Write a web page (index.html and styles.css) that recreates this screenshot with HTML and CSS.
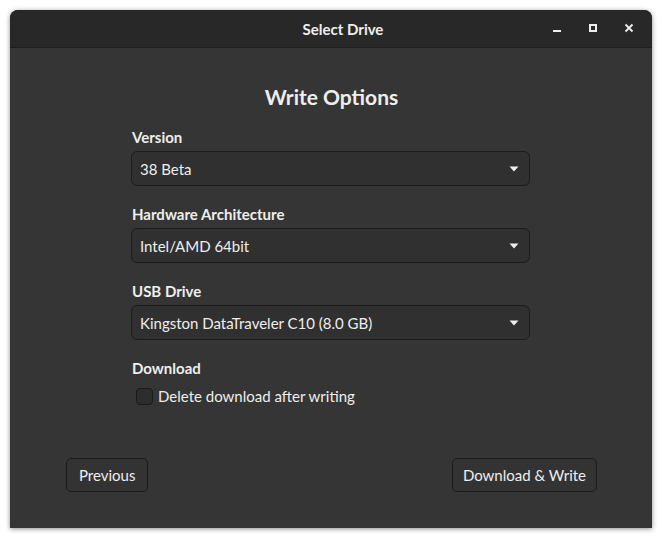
FILE: index.html
```html
<!DOCTYPE html>
<html>
<head>
<meta charset="utf-8">
<link rel="stylesheet" href="styles.css">
</head>
<body>
<div class="window">
  <div class="header">
    <div class="title">Select Drive</div>
    <div class="controls">
      <button class="ctl" aria-label="Minimize"><svg width="16" height="16" viewBox="0 0 16 16"><rect x="4" y="9" width="8" height="2" fill="#eeeeec"/></svg></button>
      <button class="ctl" aria-label="Maximize"><svg width="16" height="16" viewBox="0 0 16 16"><rect x="5" y="4" width="6" height="6" fill="none" stroke="#eeeeec" stroke-width="2"/></svg></button>
      <button class="ctl" aria-label="Close"><svg width="16" height="16" viewBox="0 0 16 16"><path d="M4.5 3.5 L11.5 10.5 M11.5 3.5 L4.5 10.5" stroke="#eeeeec" stroke-width="1.8" fill="none"/></svg></button>
    </div>
  </div>
  <div class="content">
    <h1 class="heading">Write Options</h1>
    <div class="form">
      <div class="group">
        <div class="label">Version</div>
        <button class="combo"><span>38 Beta</span><svg class="arrow" width="10" height="6" viewBox="0 0 10 6"><path d="M0.5 0.5 H9.5 L5 5.5 Z" fill="#eeeeec"/></svg></button>
      </div>
      <div class="group">
        <div class="label">Hardware Architecture</div>
        <button class="combo"><span>Intel/AMD 64bit</span><svg class="arrow" width="10" height="6" viewBox="0 0 10 6"><path d="M0.5 0.5 H9.5 L5 5.5 Z" fill="#eeeeec"/></svg></button>
      </div>
      <div class="group">
        <div class="label">USB Drive</div>
        <button class="combo"><span>Kingston DataTraveler C10 (8.0 GB)</span><svg class="arrow" width="10" height="6" viewBox="0 0 10 6"><path d="M0.5 0.5 H9.5 L5 5.5 Z" fill="#eeeeec"/></svg></button>
      </div>
      <div class="group">
        <div class="label">Download</div>
        <label class="check"><span class="box"></span><span>Delete download after writing</span></label>
      </div>
    </div>
    <div class="actions">
      <button class="btn">Previous</button>
      <button class="btn btn-wide">Download &amp; Write</button>
    </div>
  </div>
</div>
</body>
</html>
```
FILE: styles.css
```css
* { box-sizing: border-box; }
html, body { margin: 0; padding: 0; }
body {
  background: #ffffff;
  width: 662px;
  height: 539px;
  overflow: hidden;
  font-family: "Lato", "Noto Sans", sans-serif;
  color: #eeeeec;
}
.window {
  margin: 10px 0 0 10px;
  width: 642px;
  height: 518px;
  border-radius: 8px 8px 0 0;
  overflow: hidden;
  background: #353535;
  box-shadow: 0 1px 5px rgba(0,0,0,0.45);
  display: flex;
  flex-direction: column;
}
.header {
  height: 38px;
  flex: none;
  background: #282828;
  border-bottom: 1px solid #1e1e1e;
  display: flex;
  align-items: center;
}
.title {
  flex: 1;
  text-align: center;
  padding-left: 137px;
  font-size: 15px;
  font-weight: 700;
  line-height: 20px;
  padding-top: 1px;
}
.controls {
  display: flex;
  margin-right: 5px;
}
.ctl {
  width: 36px;
  height: 28px;
  border: 0;
  background: transparent;
  padding: 0;
  display: flex;
  align-items: center;
  justify-content: center;
}
.content {
  flex: 1;
  display: flex;
  flex-direction: column;
  padding: 35px 55px 36px 56px;
}
.heading {
  margin: 0;
  font-size: 21px;
  line-height: 28px;
  font-weight: 700;
  text-align: center;
}
.form {
  width: 399px;
  margin: 16px 0 0 65px;
  display: flex;
  flex-direction: column;
  gap: 18px;
}
.group {
  display: flex;
  flex-direction: column;
  gap: 4px;
}
.label {
  font-size: 15px;
  font-weight: 700;
  line-height: 20px;
  padding-left: 1px;
}
.combo {
  height: 35px;
  width: 100%;
  border: 1px solid #1c1c1c;
  border-radius: 6px;
  background: #303030;
  color: #eeeeec;
  font-family: inherit;
  font-size: 15px;
  display: flex;
  align-items: center;
  justify-content: space-between;
  padding: 0 10px 0 8px;
  text-align: left;
}
.arrow { margin-top: 1px; }
.check {
  display: flex;
  align-items: center;
  gap: 5px;
  font-size: 15px;
  line-height: 20px;
  margin-top: 4px;
  padding-left: 5px;
}
.box {
  width: 17px;
  height: 17px;
  border: 1px solid #1a1a1a;
  border-radius: 4px;
  background: #2d2d2d;
}
.actions {
  margin-top: auto;
  display: flex;
  justify-content: space-between;
}
.btn {
  height: 34px;
  padding: 0 12px;
  border: 1px solid #1c1c1c;
  border-radius: 5px;
  background: #333333;
  color: #eeeeec;
  font-family: inherit;
  font-size: 15px;
  white-space: nowrap;
}
.btn-wide { padding: 0 10px; }
```
